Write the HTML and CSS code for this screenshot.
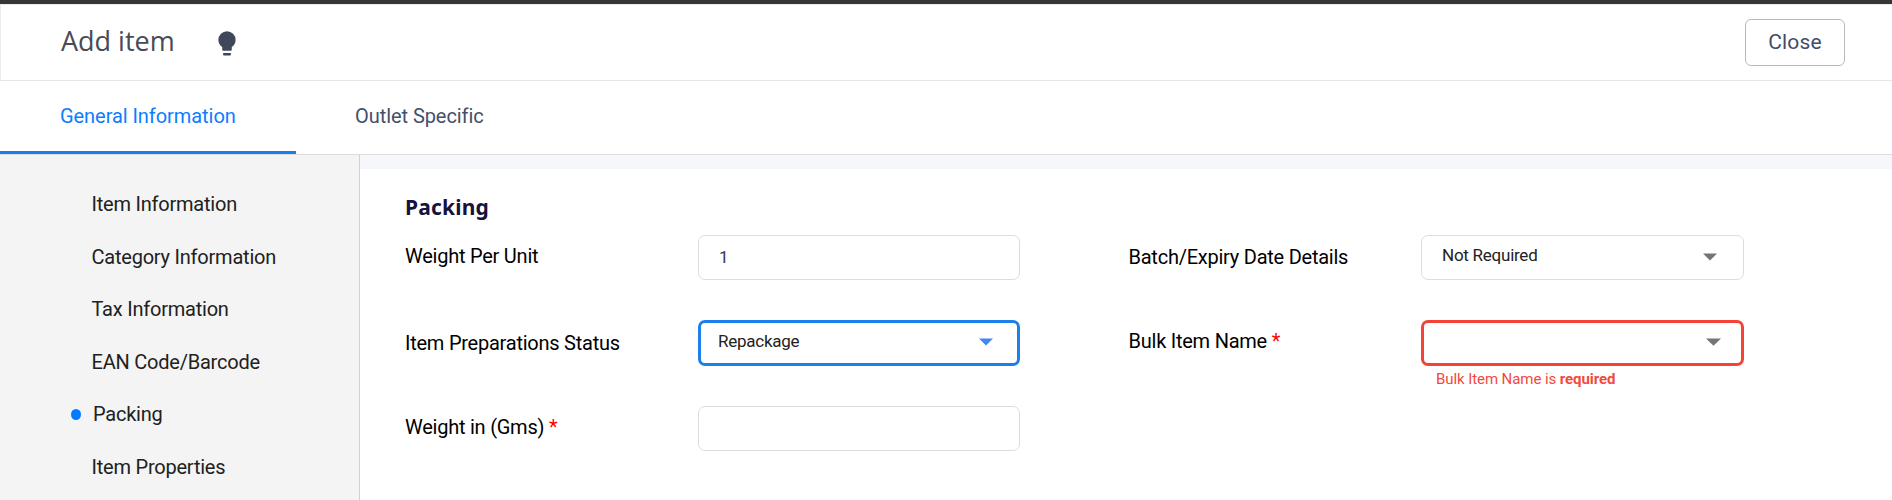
FILE: index.html
```html
<!DOCTYPE html>
<html lang="en">
<head>
<meta charset="utf-8">
<title>Add item</title>
<link rel="stylesheet" href="styles.css">
</head>
<body>
<header class="header">
  <h1 class="title">Add item</h1>
  <svg class="bulb" width="18" height="25" viewBox="0 0 18 25"><path d="M9 0.3a8.6 8.6 0 0 0-8.6 8.6c0 3 1.5 5.5 3.8 7v2.6c0 .8.5 1.3 1.2 1.3h7.2c.7 0 1.2-.5 1.2-1.3v-2.6c2.3-1.5 3.8-4 3.8-7A8.6 8.6 0 0 0 9 .3z"/><path d="M5.1 22h7.8v1.2c0 .8-.5 1.4-1.2 1.4H6.300c-.7 0-1.2-.6-1.200-1.400z"/></svg>
  <button class="close">Close</button>
</header>
<nav class="tabs">
  <a class="tab tab-active">General Information</a>
  <a class="tab">Outlet Specific</a>
</nav>
<div class="body">
  <aside class="sidebar">
    <a class="side-item">Item Information</a>
    <a class="side-item">Category Information</a>
    <a class="side-item">Tax Information</a>
    <a class="side-item">EAN Code/Barcode</a>
    <a class="side-item side-active"><span class="dot"></span>Packing</a>
    <a class="side-item">Item Properties</a>
  </aside>
  <main class="content">
    <h2 class="section-title">Packing</h2>
    <div class="form">
      <label class="label label-weight">Weight Per Unit</label>
      <div class="control control-input">1</div>
      <label class="label label-batch">Batch/Expiry Date Details</label>
      <div class="control">Not Required<svg class="arrow" width="14" height="8" viewBox="0 0 14 8"><path d="M0 .5h14l-7 7z"/></svg></div>

      <label class="label label-status">Item Preparations Status</label>
      <div class="control control-focus">Repackage<svg class="arrow" width="14" height="8" viewBox="0 0 14 8"><path d="M0 .5h14l-7 7z"/></svg></div>
      <label class="label label-bulk">Bulk Item Name&nbsp;<span class="star">*</span></label>
      <div class="field">
        <div class="control control-error"><svg class="arrow" width="15" height="8" viewBox="0 0 15 8"><path d="M0 .5h15l-7.500 7.200z"/></svg></div>
        <p class="error">Bulk Item Name is <b>required</b></p>
      </div>

      <label class="label label-gms">Weight in (Gms)&nbsp;<span class="star">*</span></label>
      <div class="control control-input"></div>
    </div>
  </main>
</div>
</body>
</html>
```
FILE: styles.css
```css
* { box-sizing: border-box; }
html { overflow: hidden; }
body {
  margin: 0;
  height: 500px;
  overflow: hidden;
  display: flex;
  flex-direction: column;
  background: #fff;
  font-family: Roboto, sans-serif;
  font-size: 20px;
}
.header {
  display: flex;
  align-items: center;
  height: 81px;
  flex: none;
  padding: 0 47px 0 61px;
  border-top: 4px solid #363637;
  border-bottom: 1px solid #e6e6e8;
  box-shadow: inset 1px 1px #ececec;
}
.title {
  margin: 0 42px 0 0;
  width: 115px;
  padding-bottom: 2px;
  white-space: nowrap;
  font: 400 27px/36px "Open Sans", sans-serif;
  color: #494b54;
}
.bulb { fill: #41475a; margin-top: 2px; }
.close {
  margin-left: auto;
  width: 100px;
  height: 47px;
  padding: 0;
  border: 1px solid #b8b8c0;
  border-radius: 6px;
  background: #fff;
  font: 400 21px Roboto, sans-serif;
  letter-spacing: .2px;
  color: #3f4d6b;
}
.tabs {
  display: flex;
  flex: none;
  height: 74px;
  border-bottom: 1px solid #dcdcdc;
}
.tab {
  padding: 0 59px;
  line-height: 70px;
  letter-spacing: -.06px;
  color: #434f6b;
}
.tab-active {
  width: 296px;
  padding-left: 60px;
  color: #0d7dff;
  white-space: nowrap;
  border-bottom: 3px solid #1a80e8;
}
.body { display: flex; flex: 1; min-height: 0; }
.sidebar {
  width: 360px;
  flex: none;
  padding-top: 23px;
  background: #f4f4f4;
  border-right: 1px solid #d0d0d0;
}
.side-item {
  display: flex;
  align-items: center;
  height: 52.5px;
  padding-left: 91.500px;
  letter-spacing: -.22px;
  color: #212121;
}
.side-active { padding-left: 71px; }
.dot {
  width: 10px;
  height: 11px;
  margin-right: 12px;
  border-radius: 50%;
  background: #007bff;
}
.content {
  flex: 1;
  border-top: 14px solid #f6f7fa;
  padding: 24px 0 0 45px;
}
.section-title {
  margin: 0 0 14px;
  font: 700 21px/28px "Noto Sans", sans-serif;
  letter-spacing: .2px;
  color: #17123d;
}
.form {
  display: grid;
  grid-template-columns: 293px 322px 401px 323px;
  grid-template-rows: 85px 86px 85px;
  align-items: start;
}
.label { line-height: 24px; letter-spacing: -.24px; color: #000; white-space: nowrap; }
.label:nth-of-type(even) { padding-left: 108.500px; }
.star { color: #f00; }
.label-weight { padding-top: 9px; }
.label-batch { padding-top: 10px; }
.label-status { padding-top: 11px; }
.label-bulk { padding-top: 9px; }
.label-gms { padding-top: 9px; }
.control {
  display: flex;
  align-items: center;
  justify-content: space-between;
  height: 45px;
  padding: 0 26px 5px 20px;
  border: 1px solid #d9dee3;
  border-radius: 7px;
  font-size: 17px;
  letter-spacing: -.25px;
  color: #222;
}
.control-input { padding-bottom: 1px; color: #333a50; }
.control-focus, .control-error { height: 46px; padding: 0 24px 5px 17px; border: 3px solid #1c80e8; }
.control-error { border-color: #f44336; padding-right: 20px; justify-content: flex-end; }
.arrow { fill: #757575; margin-top: 3px; }
.control-focus .arrow { fill: #4285f4; }
.error {
  margin: 4px 0 0 15px;
  font-size: 15px;
  line-height: 18px;
  letter-spacing: -.08px;
  color: #f04a40;
}
```
